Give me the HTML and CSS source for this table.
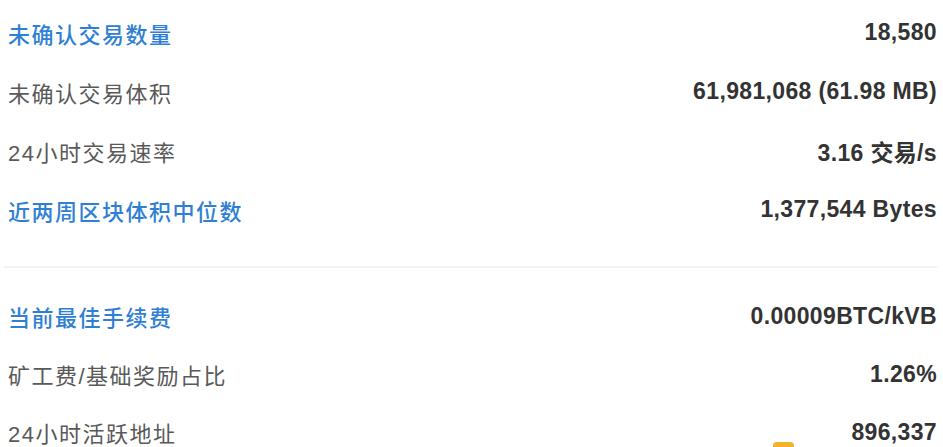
FILE: index.html
```html
<!DOCTYPE html>
<html lang="zh-CN">
<head>
  <meta charset="UTF-8">
  <title>网络概况</title>
  <link rel="stylesheet" href="styles.css">
</head>
<body>

  <div class="stats">
    <div class="section">
      <div class="row">
        <a href="#" class="label link">未确认交易数量</a>
        <span class="value">18,580</span>
      </div>
      <div class="row">
        <span class="label">未确认交易体积</span>
        <span class="value">61,981,068 (61.98 MB)</span>
      </div>
      <div class="row">
        <span class="label">24小时交易速率</span>
        <span class="value">3.16 交易/s</span>
      </div>
      <div class="row">
        <a href="#" class="label link">近两周区块体积中位数</a>
        <span class="value">1,377,544 Bytes</span>
      </div>
    </div>

    <div class="divider"></div>

    <div class="section tight">
      <div class="row">
        <a href="#" class="label link">当前最佳手续费</a>
        <span class="value">0.00009BTC/kVB</span>
      </div>
      <div class="row">
        <span class="label">矿工费/基础奖励占比</span>
        <span class="value">1.26%</span>
      </div>
      <div class="row last">
        <span class="label">24小时活跃地址</span>
        <span class="value">896,337</span>
        <span class="float-badge"></span>
      </div>
    </div>
  </div>

</body>
</html>
```

FILE: styles.css
```css
body {
  margin: 0;
  background-color: #ffffff;
  font-family: "Liberation Sans", "Noto Sans CJK SC", sans-serif;
  overflow: hidden;
}

.stats {
  padding: 3px 6px 0 8px;
}

.row {
  height: 59px;
  display: flex;
  justify-content: space-between;
  align-items: center;
}

.tight .row {
  height: 58px;
}

.last {
  position: relative;
}

.label {
  font-size: 22px;
  letter-spacing: 1.5px;
  color: #595959;
  text-decoration: none;
}

.link {
  color: #2f7fd5;
  font-weight: 500;
}

.value {
  font-size: 23px;
  letter-spacing: 0.35px;
  font-weight: bold;
  color: #333333;
}

.divider {
  height: 2px;
  margin: 27px 0 19px -4px;
  background-color: #f1f2f4;
}

.float-badge {
  position: absolute;
  left: 765px;
  top: 39px;
  width: 21px;
  height: 10px;
  border-radius: 4px;
  background-color: #f3b22c;
}
```
